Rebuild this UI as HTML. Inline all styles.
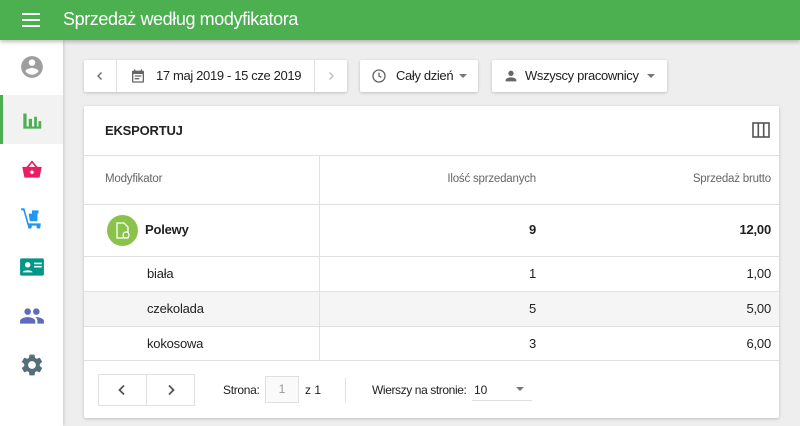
<!DOCTYPE html>
<html><head><meta charset="utf-8"><style>
*{box-sizing:border-box;margin:0;padding:0}
body{width:800px;height:426px;overflow:hidden;background:#eeeeee;font-family:"Liberation Sans",sans-serif;position:relative;font-size:13px;color:#212121}
.hdr{position:absolute;left:0;top:0;width:800px;height:40px;background:#4caf50;box-shadow:0 2px 4px rgba(0,0,0,.25);z-index:3}
.hdr .t{position:absolute;left:63px;top:9px;color:#fff;font-size:18px;letter-spacing:-0.4px}
.side{position:absolute;left:0;top:40px;width:63px;height:386px;background:#fff;box-shadow:1px 0 3px rgba(0,0,0,.15);z-index:2}
.ic{position:absolute;left:19px;width:26px;height:26px}
.box{position:absolute;background:#fff;box-shadow:0 1px 3px rgba(0,0,0,.2);border-radius:2px}
.abs{position:absolute}
.tb{font-size:13px;letter-spacing:-0.35px}
.card{left:84px;top:106px;width:695px;height:312px}
.row{position:absolute;left:0;width:695px;border-bottom:1px solid #e0e0e0;letter-spacing:-0.2px}
</style></head><body>
<div class="hdr">
<svg class="abs" style="left:22px;top:12px" width="18" height="16"><rect y="1" width="18" height="2" fill="#fff"/><rect y="7" width="18" height="2" fill="#fff"/><rect y="13" width="18" height="2" fill="#fff"/></svg>
<div class="t">Sprzedaż według modyfikatora</div></div>
<div class="side">
<svg class="ic" style="top:14px" viewBox="0 0 24 24"><path fill="#9e9e9e" d="M12 2C6.48 2 2 6.48 2 12s4.48 10 10 10 10-4.48 10-10S17.52 2 12 2zm0 3c1.66 0 3 1.34 3 3s-1.34 3-3 3-3-1.34-3-3 1.34-3 3-3zm0 14.2c-2.5 0-4.710-1.28-6-3.22.03-1.99 4-3.08 6-3.08 1.99 0 5.97 1.09 6 3.08-1.29 1.94-3.5 3.22-6 3.22z"/></svg>
<div class="abs" style="left:0;top:55px;width:63px;height:49px;background:#f2f2f2"></div>
<div class="abs" style="left:0;top:55px;width:3px;height:49px;background:#4caf50"></div>
<svg class="ic" style="top:67px" viewBox="0 0 24 24"><path fill="#4caf50" d="M4 6h3v13H4zM9 11h3v8H9zM14 9h2.5v10H14zM18 13h2.5v6H18zM4 18h16.5v2H4z"/></svg>
<svg class="ic" style="top:116px" viewBox="0 0 24 24"><path fill="#e91e63" d="M3 10h18l-2 10H5zM7 10l5-6 5 6h-2l-3-3.5L9 10z"/><circle cx="12" cy="15" r="1.6" fill="#fff"/></svg>
<svg class="ic" style="top:165px" viewBox="0 0 24 24"><path fill="#2196f3" d="M2 3h3l4 14h11v2H8L4 5H2zM9 8h8v7h-7zM12 5h6v3h-6z"/><circle cx="10" cy="20" r="1.8" fill="#2196f3"/><circle cx="18" cy="20" r="1.8" fill="#2196f3"/></svg>
<svg class="ic" style="top:214px" viewBox="0 0 24 24"><rect x="1" y="4" width="22" height="16" rx="1.5" fill="#009688"/><circle cx="8" cy="10" r="2.5" fill="#fff"/><path fill="#fff" d="M3.5 17c0-2.5 9-2.5 9 0zM14 8h7v1.5h-7zM14 11h7v1.5h-7z"/></svg>
<svg class="ic" style="top:263px" viewBox="0 0 24 24"><path fill="#5c6bc0" d="M16 11c1.66 0 3-1.34 3-3s-1.34-3-3-3-3 1.34-3 3 1.34 3 3 3zm-8 0c1.66 0 3-1.34 3-3S9.66 5 8 5 5 6.34 5 8s1.34 3 3 3zm0 2c-2.33 0-7 1.17-7 3.5V19h14v-2.5c0-2.330-4.67-3.5-7-3.5zm8 0c-.29 0-.62.02-.97.05 1.16.84 1.970 1.97 1.97 3.45V19h6v-2.5c0-2.33-4.67-3.5-7-3.5z"/></svg>
<svg class="ic" style="top:312px" viewBox="0 0 24 24"><path fill="#546e7a" d="M19.14 12.94c.04-.3.06-.61.06-.94 0-.32-.02-.64-.07-.94l2.03-1.58a.49.49 0 00.12-.61l-1.92-3.32a.49.49 0 00-.59-.22l-2.39.96c-.5-.38-1.03-.7-1.62-.94l-.36-2.54a.48.48 0 00-.48-.41h-3.84c-.24 0-.43.17-.47.41l-.36 2.54c-.59.24-1.13.57-1.62.94l-2.39-.96a.48.48 0 00-.59.22L2.740 8.87c-.12.21-.8.47.12.61l2.03 1.58c-.05.3-.09.63-.09.94s.02.64.07.94l-2.03 1.58a.49.49 0 00-.12.61l1.92 3.32c.12.22.37.29.59.22l2.39-.96c.5.38 1.03.7 1.62.94l.36 2.54c.05.24.24.41.48.41h3.84c.24 0 .44-.17.47-.41l.36-2.54c.59-.24 1.13-.56 1.62-.94l2.39.96c.22.08.47 0 .59-.22l1.92-3.32c.12-.22.07-.47-.12-.61l-2.01-1.58zM12 15.6A3.6 3.6 0 1112 8.4a3.6 3.6 0 010 7.2z"/></svg>
</div>

<div class="box" style="left:84px;top:60px;width:263px;height:32px"></div>
<div class="abs" style="left:116px;top:60px;width:1px;height:32px;background:#e0e0e0"></div>
<div class="abs" style="left:314px;top:60px;width:1px;height:32px;background:#e0e0e0"></div>
<svg class="abs" style="left:96px;top:71px" width="8" height="10"><path d="M5.5 1.5L2 5l3.5 3.5" fill="none" stroke="#666" stroke-width="1.3"/></svg>
<svg class="abs" style="left:327px;top:71px" width="8" height="10"><path d="M2.5 1.5L6 5 2.5 8.5" fill="none" stroke="#bbb" stroke-width="1.3"/></svg>
<svg class="abs" style="left:130px;top:68px" width="16" height="16" viewBox="0 0 24 24"><path fill="#666" d="M19 4h-1V2h-2v2H8V2H6v2H5a2 2 0 00-2 2v14a2 2 0 002 2h14a2 2 0 002-2V6a2 2 0 00-2-2zm0 16H5V9h14zM7 11h10v2H7zm0 4h7v2H7z"/></svg>
<div class="abs tb" style="left:156px;top:68px">17 maj 2019 - 15 cze 2019</div>
<div class="box" style="left:360px;top:60px;width:118px;height:32px"></div>
<svg class="abs" style="left:371px;top:68px" width="16" height="16" viewBox="0 0 24 24"><circle cx="12" cy="12" r="9" fill="none" stroke="#666" stroke-width="2"/><path d="M12 7v5l3.5 2" fill="none" stroke="#666" stroke-width="2"/></svg>
<div class="abs tb" style="left:396px;top:68px">Cały dzień</div>
<div class="abs" style="left:459px;top:74px;border:4px solid transparent;border-top:4px solid #777"></div>
<div class="box" style="left:492px;top:60px;width:175px;height:32px"></div>
<svg class="abs" style="left:503px;top:68px" width="16" height="16" viewBox="0 0 24 24"><path fill="#666" d="M12 12a4 4 0 100-8 4 4 0 000 8zm0 2c-2.7 0-8 1.3-8 4v2h16v-2c0-2.7-5.3-4-8-4z"/></svg>
<div class="abs tb" style="left:525px;top:68px">Wszyscy pracownicy</div>
<div class="abs" style="left:647px;top:74px;border:4px solid transparent;border-top:4px solid #777"></div>

<div class="box card">
<div class="row" style="top:0;height:50px"><div class="abs" style="left:21px;top:17px;font-size:13px;font-weight:bold;color:#222">EKSPORTUJ</div>
<svg class="abs" style="left:668px;top:15px" width="18" height="18" viewBox="0 0 18 18"><rect x="1" y="2" width="16" height="14" fill="none" stroke="#555" stroke-width="1.6"/><path d="M6.3 2v14M11.7 2v14" stroke="#555" stroke-width="1.6"/></svg></div>
<div class="row" style="top:50px;height:49px;color:#666;font-size:11.5px"><div class="abs" style="left:21px;top:17px">Modyfikator</div><div class="abs" style="right:243px;top:17px">Ilość sprzedanych</div><div class="abs" style="right:8px;top:17px">Sprzedaż brutto</div></div>
<div class="row" style="top:99px;height:52px;font-weight:bold;font-size:13px"><div class="abs" style="left:23px;top:10px;width:31px;height:31px;border-radius:50%;background:#8bc34a"></div>
<svg class="abs" style="left:31px;top:17px" width="16" height="18" viewBox="0 0 16 18"><path d="M2 1h7l4 4v11H2z" fill="none" stroke="#fff" stroke-width="1.3"/><circle cx="11" cy="13" r="3" fill="#8bc34a" stroke="#fff" stroke-width="1.2"/></svg>
<div class="abs" style="left:61px;top:17px">Polewy</div><div class="abs" style="right:243px;top:17px">9</div><div class="abs" style="right:8px;top:17px">12,00</div></div>
<div class="row" style="top:151px;height:35px"><div class="abs" style="left:63px;top:9px">biała</div><div class="abs" style="right:243px;top:9px">1</div><div class="abs" style="right:8px;top:9px">1,00</div></div>
<div class="row" style="top:186px;height:35px;background:#f5f5f5"><div class="abs" style="left:63px;top:9px">czekolada</div><div class="abs" style="right:243px;top:9px">5</div><div class="abs" style="right:8px;top:9px">5,00</div></div>
<div class="row" style="top:221px;height:34px"><div class="abs" style="left:63px;top:9px">kokosowa</div><div class="abs" style="right:243px;top:9px">3</div><div class="abs" style="right:8px;top:9px">6,00</div></div>
<div class="abs" style="left:235px;top:50px;width:1px;height:205px;background:#e0e0e0"></div>
<div class="abs" style="left:14px;top:268px;width:97px;height:32px;border:1px solid #e0e0e0"></div>
<div class="abs" style="left:62px;top:268px;width:1px;height:32px;background:#e0e0e0"></div>
<svg class="abs" style="left:33px;top:278px" width="10" height="12"><path d="M7 1.5L2.5 6 7 10.5" fill="none" stroke="#555" stroke-width="1.8"/></svg>
<svg class="abs" style="left:82px;top:278px" width="10" height="12"><path d="M3 1.5L7.5 6 3 10.5" fill="none" stroke="#555" stroke-width="1.8"/></svg>
<div class="abs" style="left:139px;top:277px;font-size:12px;letter-spacing:-0.3px">Strona:</div>
<div class="abs" style="left:181px;top:270px;width:34px;height:27px;border:1px solid #e0e0e0;background:#fafafa;color:#999;font-size:12px;text-align:center;line-height:25px">1</div>
<div class="abs" style="left:221px;top:277px;font-size:12px">z 1</div>
<div class="abs" style="left:261px;top:272px;width:1px;height:24px;background:#e0e0e0"></div>
<div class="abs" style="left:288px;top:277px;font-size:12px;letter-spacing:-0.4px">Wierszy na stronie:</div>
<div class="abs" style="left:390px;top:277px;font-size:12px">10</div>
<div class="abs" style="left:432px;top:281px;border:4px solid transparent;border-top:4px solid #777"></div>
<div class="abs" style="left:388px;top:294px;width:60px;height:1px;background:#ddd"></div>
</div>
</body></html>
